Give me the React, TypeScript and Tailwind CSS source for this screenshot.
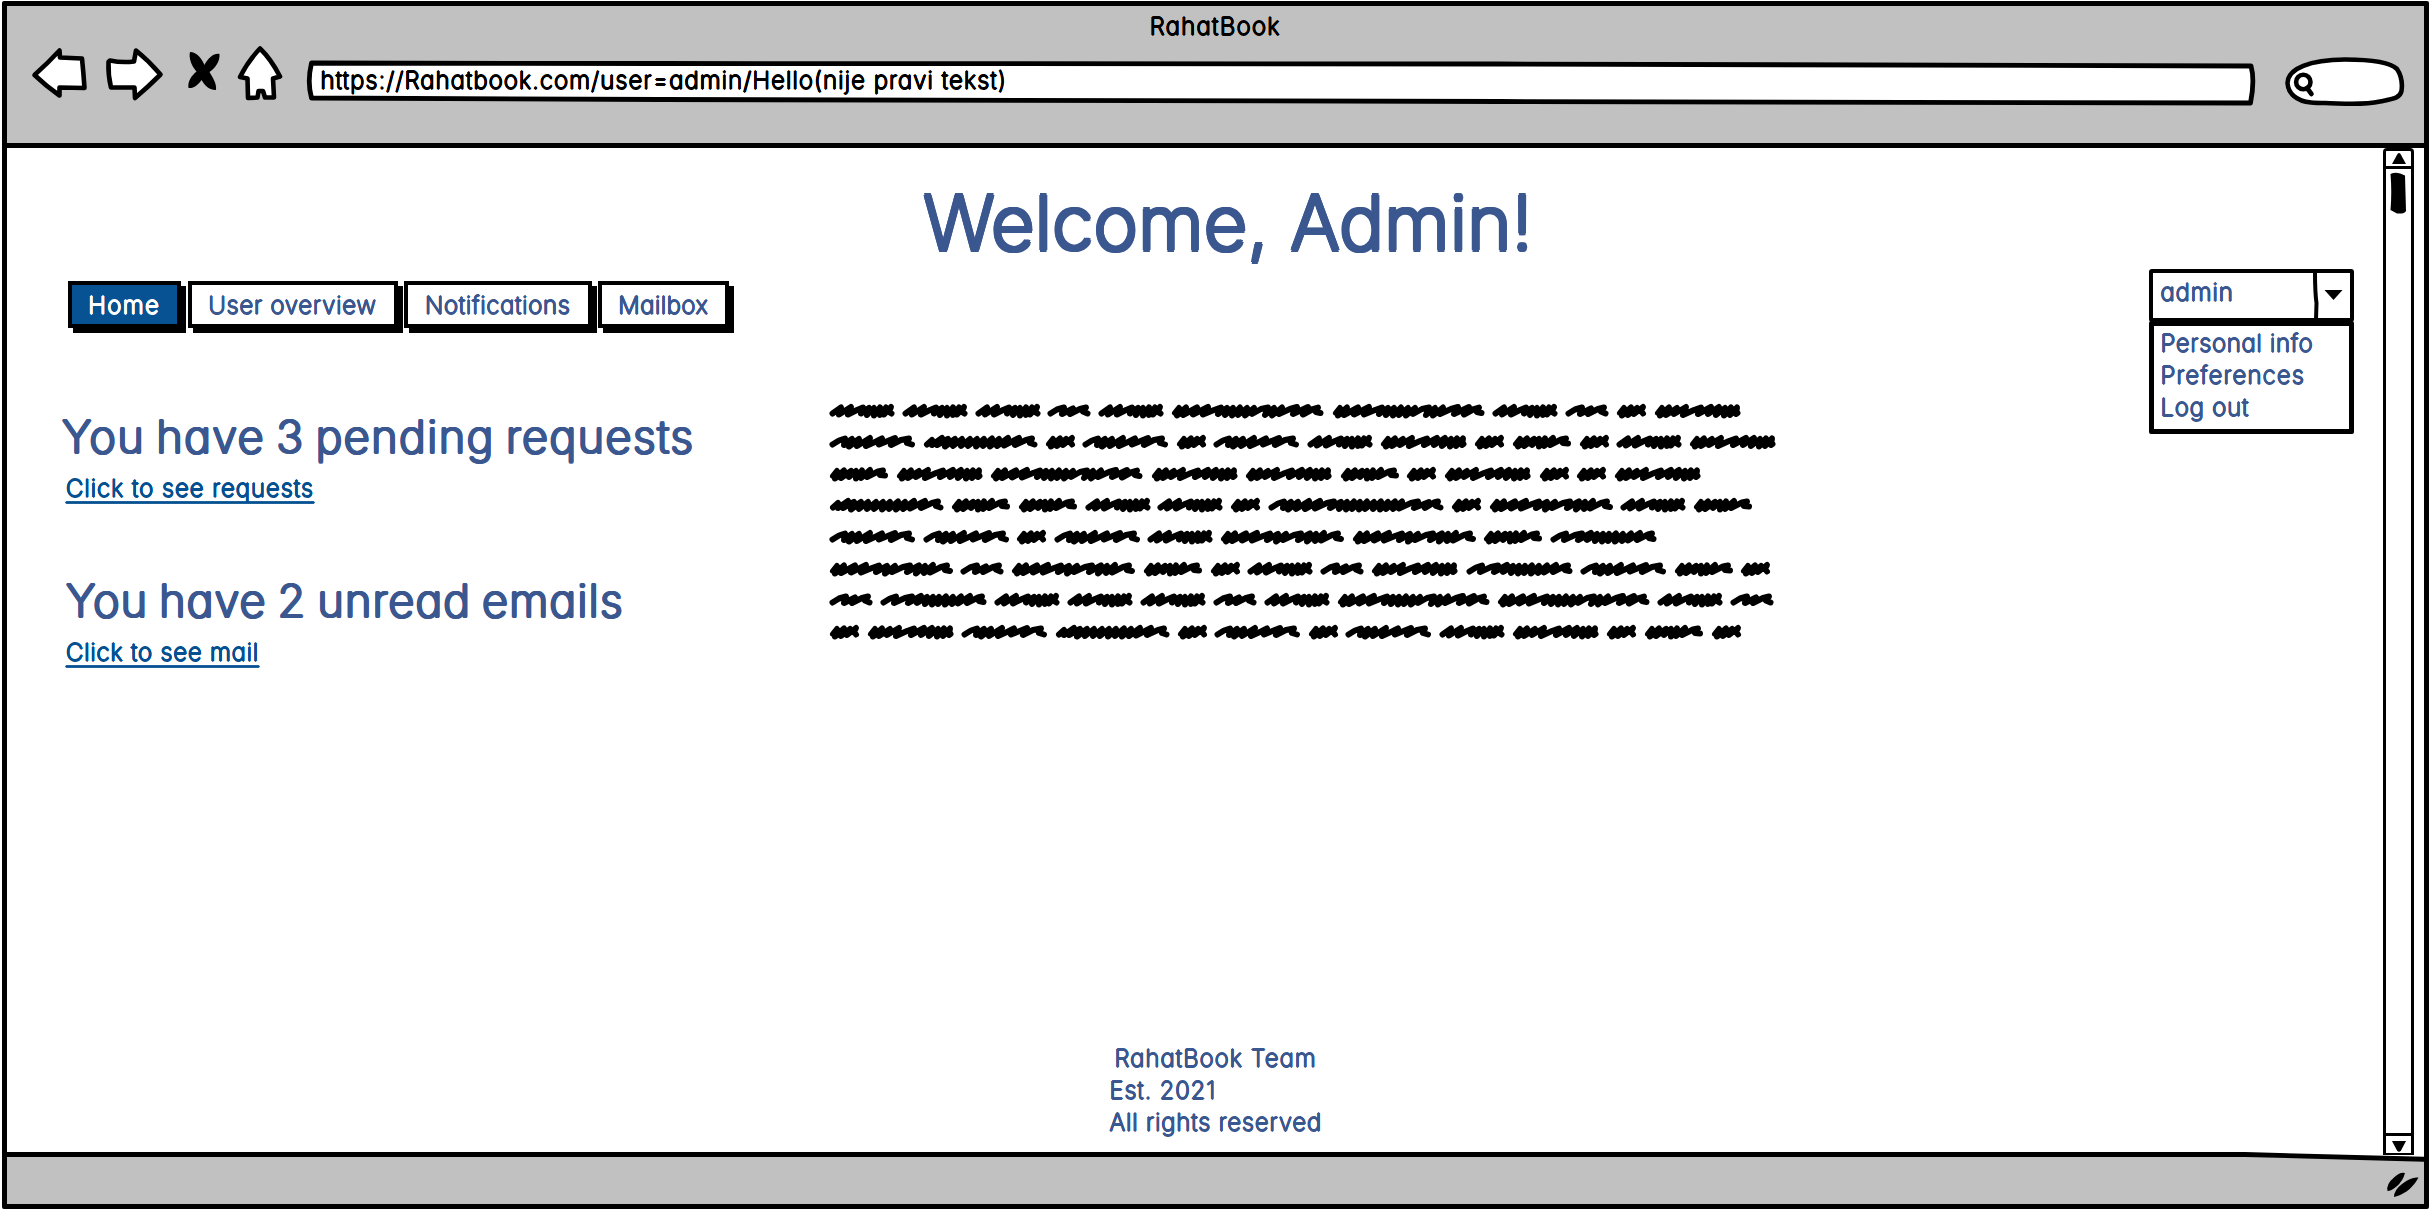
import React from "react";

// Round-ended pen strokes: a thin face thickened evenly in every direction.
const pen =
  "font-extralight text-[24px] leading-8 whitespace-nowrap [text-shadow:0.65px_0_0_currentColor,-0.65px_0_0_currentColor,0_0.65px_0_currentColor,0_-0.65px_0_currentColor,0.45px_0.45px_0_currentColor,-0.45px_0.45px_0_currentColor,0.45px_-0.45px_0_currentColor,-0.45px_-0.45px_0_currentColor]";
const penMedium =
  "font-extralight text-[45px] leading-[56px] whitespace-nowrap [text-shadow:1.4px_0_0_currentColor,-1.4px_0_0_currentColor,0_1.4px_0_currentColor,0_-1.4px_0_currentColor,1px_1px_0_currentColor,-1px_1px_0_currentColor,1px_-1px_0_currentColor,-1px_-1px_0_currentColor]";
const penLarge =
  "font-extralight text-[75px] leading-[80px] whitespace-nowrap [text-shadow:2.3px_0_0_currentColor,-2.3px_0_0_currentColor,0_2.3px_0_currentColor,0_-2.3px_0_currentColor,1.65px_1.65px_0_currentColor,-1.65px_1.65px_0_currentColor,1.65px_-1.65px_0_currentColor,-1.65px_-1.65px_0_currentColor]";

// Scribbled words: width and zigzag stroke of each.
const words: Record<string, { w: number; d: string }> = {
  S: { w: 28.8, d: "3,9 7,4 5,11.5 14,3.5 11,11 20,4 17,10 26,3 24,7 26,9.5" },
  N: { w: 42.3, d: "2.5,9.5 9,5.5 16,3.5 14,10 25,4.5 22,10 32,5 38,3.5 35,7.5 39.5,9.5" },
  C: { w: 58, d: "3,9 7,4 5,11.5 14,3.5 11,11 21,4 19,10 26,4 26,11.5 32,3.5 31,11 40,3 37,10 48,4.5 53,3.5 50,8 55,8.5" },
  M: { w: 64, d: "2.5,9.5 11,3.5 9,10.5 21,3 18,10.5 27,6 33,3.5 31,9.5 39,4 37,11 44,4 44,11.5 50,3.5 50,11 56,3.5 54,10.5 61,3 59,8 61.5,9.5" },
  P: { w: 84.8, d: "2.5,9.5 9,5.5 15,3.5 14,10 22,4 19,11.5 29,4 27,11 40,3 36,11 46,6.5 52,3.5 49,9.5 65,3 61,10 71,5 79,3.5 77,8 82,9.5" },
  Q: { w: 85.7, d: "3,9 7,4 5,11.5 14,3.5 11,11 22,4 19,10 31,3 28,11 39,6 46,3.5 43,10 56,3 53,10 64,3 61,11 70,4 69,11.5 76,3.5 75,11 82,3.5 81,10 82.5,9" },
  X: { w: 105.5, d: "2.5,9.5 9,5.5 15,3.5 13,10 24,5 31,3.5 27,10 40,3 36,10 46,4 44,11 52,4 51,11.5 58,4 57,11 65,3.5 64,11.5 72,4 71,11 80,3.5 77,10.5 89,3 86,10 97,4.5 101,3.5 98,8 102.5,9" },
  V: { w: 113.2, d: "3,9.5 8,5 8,10 18,3 13,10 24,4 21,11.5 31,4 29,11 38,4 37,11 46,4 44,11 53,4 52,11.5 60,4 59,11 68,3.5 66,11.5 75,4 73,11 84,3 80,10.5 95,3 91,10 102,5 108,3.5 106,8 110.5,9.5" },
  W: { w: 122.6, d: "3,9 7,4 5,11.5 14,3.5 11,11 25,3.5 21,10.5 36,3 31,10.5 42,6 49,3.5 46,10 57,4 55,11.5 65,4 62,10 73,5 80,3.5 77,10 89,3.5 86,11.5 95,4 94,11 103,3 100,10.5 111,5 117,3.5 115,8 120,9" },
  Z: { w: 151.6, d: "3,9 7,4 5,11.5 14,3.5 11,11 25,3.5 21,10.5 36,3 31,10.5 42,6 49,3.5 46,10 55,4 53,11 61,4 60,11.5 68,3.5 66,11 75,4 73,11.5 82,4 80,10 89,5 96,3.5 93,11 102,4 100,11.5 110,3.5 107,10 118,5 125,3 121,10 136,3 131,10.5 141,5 146,3.5 144,8 148.5,9" },
  Y: { w: 174.7, d: "2.5,9.5 9,5.5 15,3.5 14,10 22,4 19,11.5 29,4 27,11 40,3 36,11 51,3 46,10.5 58,5 65,3.5 61,10 72,4 70,11 78,4 77,11.5 85,3.5 83,11 91,4 90,11.5 98,3.5 96,11 105,4 104,11 112,3.5 111,11.5 119,4 117,11 126,3.5 124,11 133,3.5 130,10.5 142,5 149,3.5 145,10 160,4 156,10 165,4.5 169,3.5 167,8 171.5,9.5" },
};

const scribbleRows = [
  "MMMNMZZMNSQ",
  "PVSPSPMQSCSMQ",
  "CQZQQCSQSSQ",
  "VCCMMSYSWMC",
  "PPSPMWWCX",
  "WNWCSMNQXPCS",
  "NXMMMNMZZMN",
  "SQPVSPSPMQSCS",
];

function Scribble({ kind }: { kind: string }) {
  const { w, d } = words[kind];
  return (
    <svg width={w} height="14.5" viewBox={`0 0 ${w} 14.5`} className="shrink-0 overflow-visible">
      <polyline points={d} fill="none" stroke="#000" strokeWidth="6" strokeLinejoin="round" strokeLinecap="round" />
    </svg>
  );
}

function Tool({ x, w, children }: { x: number; w: number; children: React.ReactNode }) {
  return (
    <svg
      width={w}
      height="64"
      viewBox={`${x} 44 ${w} 64`}
      className="shrink-0"
      fill="#fff"
      stroke="#000"
      strokeWidth="4.6"
      strokeLinejoin="round"
      strokeLinecap="round"
    >
      {children}
    </svg>
  );
}

function BrowserHeader() {
  return (
    <header className="h-[142px] shrink-0 border-b-[5px] border-black bg-[#c1c1c1]">
      <div className={`${pen} pt-[5px] text-center tracking-[1.3px]`}>RahatBook</div>
      <div className="mt-px flex pl-[23px]">
        <Tool x={30} w={60}>
          <path d="M34.5 75 Q48 63 59.5 50.5 L60 57.5 L82 58.5 Q83.5 73 84.5 88 L59.5 87.5 L59.5 95.5 Q46 86 34.5 75Z" />
        </Tool>
        <div className="ml-[14px] flex">
          <Tool x={104} w={62}>
            <path d="M110 60.5 Q122 63 134 61.5 L136 50.5 Q149 61 160.5 74.5 Q148 87 135 98 L134.5 87.5 L111 87.5 Q108 75 108.5 62Z" />
          </Tool>
        </div>
        <div className="ml-[18px] flex">
          <Tool x={184} w={40}>
            <path
              fill="#000"
              stroke="none"
              d="M190 52 C197 52 202 59 204.5 65 C208 58 214 53 219.5 54 C220 62 215 68 209.5 72 C213 78 217 84 216 90 C208 90 204 84 201.5 80 C198 85 194 88.5 188.5 88 C187.5 82 191 76 196.5 71.5 C191.5 66 188.5 58 190 52Z"
            />
          </Tool>
        </div>
        <div className="ml-[10px] flex">
          <Tool x={234} w={52}>
            <path d="M260 48.5 Q271 59 280 76.5 L273 78.5 L274 97.5 L265 97.5 L263 91 L258.5 91 L257.5 97.5 L248 98 L247.5 78.5 L240 77 Q248 61 260 48.5Z" />
          </Tool>
        </div>
        <div className="relative ml-[20px] h-16 w-[1952px]">
          <svg width="1952" height="64" viewBox="306 44 1952 64" className="absolute inset-0" fill="#fff" stroke="#000" strokeWidth="4.8" strokeLinejoin="round">
            <path d="M311.5 63 L660 63.5 L1500 64 L2251 66 Q2255 80 2250.5 103 L1500 101.5 L660 99.5 L311.5 98 Q307 82 311.5 63Z" />
          </svg>
          <div className={`${pen} relative pt-[21px] pl-[14.5px] tracking-[1.06px]`}>
            https://Rahatbook.com/user=admin/Hello(nije pravi tekst)
          </div>
        </div>
        <div className="ml-[26px] flex">
          <Tool x={2284} w={122}>
            <path d="M2311 102.5 C2296 101 2288 93 2287.5 83 C2288 68 2310 60 2345 59.5 C2372 59.5 2391 63 2397 69 C2401 75 2402.5 84 2401.5 91 C2400 98 2394 98.5 2380 101.5 C2362 105.5 2345 103.5 2325 103 C2318 103 2314 102.8 2311 102.5Z" />
            <circle cx="2303.3" cy="82" r="7.2" />
            <path d="M2307 88 L2311.5 94" />
          </Tool>
        </div>
      </div>
    </header>
  );
}

function NavButton({ className, children }: { className: string; children: React.ReactNode }) {
  return (
    <button
      className={`${pen} h-[47px] border-[4.5px] border-black pt-[5px] pb-[2px] text-center shadow-[5px_5px_0_0_#000] ${className}`}
    >
      {children}
    </button>
  );
}

function UserMenu() {
  return (
    <div className="w-[205px] shrink-0">
      <div className="flex h-[53px] rounded-[3px] border-4 border-black">
        <div className={`${pen} flex-1 pt-[4px] pl-[8px] tracking-[0.9px]`}>admin</div>
        <svg width="38" height="45" viewBox="0 0 38 45" className="shrink-0">
          <path d="M3 -1 Q3 20 4.5 30 L4 47" fill="none" stroke="#000" strokeWidth="4" />
          <path d="M12.5 17 L30.5 17 L21.5 27Z" fill="#000" />
        </svg>
      </div>
      <div className={`${pen} -mt-px h-[113px] rounded-[2px] border-[5px] border-black pt-[2px] pl-[7px]`}>
        <div className="tracking-[0.68px]">Personal info</div>
        <div className="tracking-[1.12px]">Preferences</div>
        <div className="tracking-[0.8px]">Log out</div>
      </div>
    </div>
  );
}

function Scrollbar() {
  return (
    <div className="z-10 mr-[10px] -mb-[3px] flex w-[31px] shrink-0 flex-col items-center rounded-t-[4px] border-x-[3.5px] border-t-[3px] border-black">
      <div className="flex h-[18px] w-full items-center justify-center border-b-[3.5px] border-black pl-px">
        <svg width="14" height="11" viewBox="0 0 14 11">
          <path d="M0 11 L5.5 1 Q7 -1 8.5 1 L14 11Z" />
        </svg>
      </div>
      <svg width="16" height="42" viewBox="0 0 16 42" className="mt-[2.5px]">
        <path d="M0.5 2 Q7 -1 15 3.5 L16 39 Q15 42 7 41.5 L0.5 38 Q2 20 0.5 2Z" />
      </svg>
      <div className="mt-auto flex h-[22px] w-full justify-center border-t-[3.5px] border-b-2 border-black pt-[4.5px] pl-px">
        <svg width="14" height="11" viewBox="0 0 14 11">
          <path d="M0 0 L14 0 L9 9.5 Q7 12 5 9.5Z" />
        </svg>
      </div>
    </div>
  );
}

export default function App() {
  return (
    <div className="h-[1210px] w-[2430px] overflow-hidden bg-white pt-px pl-[2px] font-['Inter',sans-serif] text-black [font-feature-settings:'cv11']">
      <div className="flex h-[1207.5px] w-[2426.5px] flex-col rounded-[2px] border-[5px] border-black">
        <BrowserHeader />

        <div className="flex min-h-0 flex-1">
          <main className="flex flex-1 flex-col text-[#3b578f]">
            <h1 className={`${penLarge} mt-[34.5px] ml-[67px] text-center tracking-[0.5px]`}>Welcome, Admin!</h1>

            <div className="mt-[6.5px] flex justify-between pr-[29px] pl-[55px]">
              <div>
                <nav className="mt-3 ml-[5.5px] flex gap-[6.5px]">
                  <NavButton className="w-[113.5px] bg-[#075293] tracking-[1.4px] text-white">Home</NavButton>
                  <NavButton className="w-[210px] tracking-[0.75px]">User overview</NavButton>
                  <NavButton className="w-[187.5px] tracking-[0.68px]">Notifications</NavButton>
                  <NavButton className="w-[130.5px] tracking-[0.5px]">Mailbox</NavButton>
                </nav>
                <div className="flex">
                  <section className="w-[768px] pt-[81px]">
                    <h2 className={`${penMedium} tracking-[1.5px] [word-spacing:-3px]`}>You have 3 pending requests</h2>
                    <a className={`${pen} mt-2 ml-[4px] block w-fit tracking-[0.95px] text-[#045091] underline decoration-1 underline-offset-[5px] [text-decoration-skip-ink:none]`}>
                      Click to see requests
                    </a>
                    <h2 className={`${penMedium} mt-[68px] ml-[4px] tracking-[1.2px] [word-spacing:-3px]`}>You have 2 unread emails</h2>
                    <a className={`${pen} mt-2 ml-[4px] block w-fit tracking-[0.78px] text-[#045091] underline decoration-1 underline-offset-[5px] [text-decoration-skip-ink:none]`}>
                      Click to see mail
                    </a>
                  </section>
                  <section className="pt-[75.5px]">
                    {scribbleRows.map((row, i) => (
                      <div key={i} className="flex h-[31.67px] items-start gap-[8.8px]">
                        {row.split("").map((kind, j) => (
                          <Scribble key={j} kind={kind} />
                        ))}
                      </div>
                    ))}
                  </section>
                </div>
              </div>
              <UserMenu />
            </div>

            <footer className={`${pen} mt-auto ml-[1102.5px] pb-[13px]`}>
              <div className="ml-[5px] tracking-[1px]">RahatBook Team</div>
              <div className="tracking-[0.8px]">Est. 2021</div>
              <div className="tracking-[0.8px]">All rights reserved</div>
            </footer>
          </main>
          <Scrollbar />
        </div>

        <div className="h-[51.5px] shrink-0 bg-[#c1c1c1]">
          <svg width="2416.5" height="51" viewBox="7 1152 2416.5 51" className="block">
            <path d="M7 1152 L2424 1152 L2424 1159 L2245 1154.5 L7 1154.5Z" fill="#fff" />
            <path d="M5 1154.5 L2245 1154.5 L2425 1159.3" fill="none" stroke="#000" strokeWidth="4.8" />
            <path d="M2387.5 1191 Q2386 1184 2394 1177.5 Q2400 1171.5 2405 1173 Q2403 1181 2396.5 1186.5 Q2391 1191 2387.5 1191Z" />
            <path d="M2394 1197 Q2394 1190 2402 1184 Q2411 1176.5 2418.5 1177.5 Q2414 1186 2406.5 1191.5 Q2399 1196 2394 1197Z" />
          </svg>
        </div>
      </div>
    </div>
  );
}
